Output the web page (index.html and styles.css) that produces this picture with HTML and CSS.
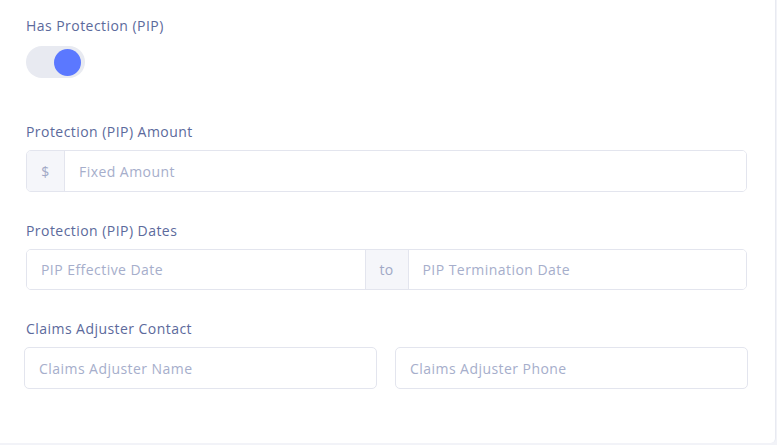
FILE: index.html
```html
<!DOCTYPE html>
<html lang="en">
<head>
<meta charset="utf-8">
<title>PIP</title>
<link rel="stylesheet" href="styles.css">
</head>
<body>
<div class="card">
  <div class="field">
    <label class="label">Has Protection (PIP)</label>
    <div class="toggle"><span class="knob"></span></div>
  </div>
  <div class="field gap-lg">
    <label class="label">Protection (PIP) Amount</label>
    <div class="group group-tall">
      <span class="addon addon-dollar">$</span>
      <input class="control" type="text" placeholder="Fixed Amount">
    </div>
  </div>
  <div class="field gap-md">
    <label class="label">Protection (PIP) Dates</label>
    <div class="group">
      <input class="control" type="text" placeholder="PIP Effective Date">
      <span class="addon addon-to">to</span>
      <input class="control" type="text" placeholder="PIP Termination Date">
    </div>
  </div>
  <div class="field gap-md">
    <label class="label">Claims Adjuster Contact</label>
    <div class="pair">
      <input class="single" type="text" placeholder="Claims Adjuster Name">
      <input class="single" type="text" placeholder="Claims Adjuster Phone">
    </div>
  </div>
</div>
</body>
</html>
```
FILE: styles.css
```css
* { box-sizing: border-box; }
html, body { margin: 0; padding: 0; }
body {
  background: #f2f3f8;
  font-family: "Open Sans", "Liberation Sans", sans-serif;
  width: 777px;
  height: 445px;
  overflow: hidden;
}
.card {
  width: 776px;
  height: 443px;
  background: #ffffff;
  border-right: 1px solid #e8eaf1;
  border-bottom-right-radius: 5px;
  padding: 16px 28px 0 26px;
}
.label {
  display: block;
  font-size: 14px;
  letter-spacing: 0.45px;
  line-height: 20px;
  color: #5c6a9c;
  padding-top: 1px;
  margin-bottom: 8px;
}
.field:first-child .label { padding-top: 0; margin-bottom: 10px; }
.gap-lg { margin-top: 43px; }
.gap-md { margin-top: 28px; }
.toggle {
  width: 59px;
  height: 32px;
  border-radius: 16px;
  background: #e8eaf1;
  display: flex;
  align-items: center;
  justify-content: flex-end;
  padding-right: 4px;
}
.knob {
  width: 27px;
  height: 27px;
  border-radius: 50%;
  background: #5b78ff;
}
.group {
  display: flex;
  height: 41px;
  border: 1px solid #e3e5ee;
  border-radius: 5px;
  overflow: hidden;
}
.group-tall { height: 42px; }
.addon {
  display: flex;
  align-items: center;
  justify-content: center;
  background: #f5f6fa;
  color: #a1a9c6;
  font-size: 14px;
  letter-spacing: 0.4px;
}
.addon-dollar {
  width: 38px;
  border-right: 1px solid #e3e5ee;
}
.addon-to {
  width: 44px;
  border-left: 1px solid #e3e5ee;
  border-right: 1px solid #e3e5ee;
}
.control, .single {
  font-family: inherit;
  font-size: 14px;
  letter-spacing: 0.45px;
  outline: 0;
  padding: 0 14px;
  background: #fff;
  color: #5c6a9c;
}
.control {
  flex: 1;
  min-width: 0;
  border: 0;
}
.control::placeholder, .single::placeholder { color: #a6aecb; }
.pair {
  display: flex;
  gap: 18px;
  margin: 0 -1px 0 -2px;
}
.single {
  flex: 1;
  min-width: 0;
  height: 42px;
  border: 1px solid #e3e5ee;
  border-radius: 5px;
}
```
